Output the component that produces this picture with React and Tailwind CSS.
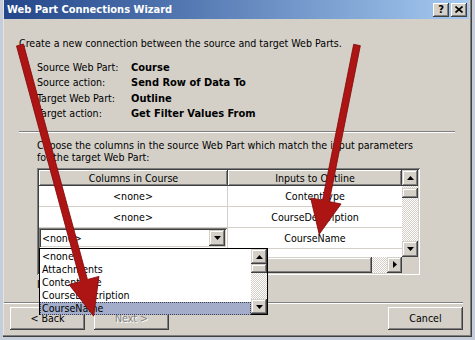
import React from "react";

const F = "font-['DejaVu_Sans_Condensed','DejaVu_Sans',sans-serif]";
const RAISED =
  "shadow-[inset_-1px_-1px_0_#404040,inset_1px_1px_0_#ffffff,inset_-2px_-2px_0_#808080,inset_2px_2px_0_#d4d0c8]";
const SCRBTN =
  "shadow-[inset_-1px_-1px_0_#404040,inset_1px_1px_0_#d4d0c8,inset_-2px_-2px_0_#808080,inset_2px_2px_0_#ffffff]";
const SUNKEN =
  "shadow-[inset_1px_1px_0_#808080,inset_-1px_-1px_0_#ffffff,inset_2px_2px_0_#404040,inset_-2px_-2px_0_#d4d0c8]";
const CHECK =
  "bg-[image:repeating-conic-gradient(#d4d0c8_0_25%,#ffffff_0_50%)] bg-[length:2px_2px]";

function Tri({ dir }) {
  const pts = {
    up: "0,4 3.5,0 7,4",
    down: "0,0 3.5,4 7,0",
    right: "0,0 4,3.5 0,7",
  }[dir];
  const w = dir === "right" ? 4 : 7;
  const h = dir === "right" ? 7 : 4;
  return (
    <svg width={w} height={h} viewBox={`0 0 ${w} ${h}`}>
      <polygon points={pts} fill="#000" />
    </svg>
  );
}

function ScrollBtn({ dir, className = "" }) {
  return (
    <div
      className={`bg-[#d4d0c8] ${SCRBTN} flex items-center justify-center shrink-0 ${className}`}
    >
      <Tri dir={dir} />
    </div>
  );
}

function Arrows() {
  const arrow = (x, y, ang, len, hw, hl, hh) => (
    <g transform={`translate(${x} ${y}) rotate(${ang})`}>
      <polygon
        points={`0,${-hw} ${len - hl},${-hw} ${len - hl},${-hh} ${len},0 ${len - hl},${hh} ${len - hl},${hw} 0,${hw}`}
        fill="#ad1515"
        stroke="#850c0c"
        strokeWidth="0.8"
        strokeLinejoin="round"
      />
    </g>
  );
  return (
    <svg
      className="absolute inset-0 pointer-events-none"
      width="475"
      height="340"
      viewBox="0 0 475 340"
    >
      {arrow(20, 45, 74.8, 281, 3.6, 37, 15.5)}
      {arrow(357, 45, 101.3, 193, 3.4, 34, 15.5)}
    </svg>
  );
}

export default function App() {
  return (
    <div
      className={`w-[475px] h-[340px] relative overflow-hidden bg-[#c6cdda] flex pl-[3px] pr-[3px] pb-[3px] ${F} text-[10.6px] text-black`}
    >
      {/* dialog */}
      <div className="flex-1 flex flex-col bg-[#d4d0c8] pl-[1px] pr-[3px] pb-[3px] shadow-[inset_-1px_-1px_0_#404040,inset_-2px_-2px_0_#808080,inset_1px_0_0_#e6e4de]">
        {/* title bar */}
        <div className="h-[19px] shrink-0 flex items-center pl-[3px] pr-[2px] bg-gradient-to-r from-[#24468a] to-[#a6caf0]">
          <span className="text-white font-bold text-[11px] leading-none">
            Web Part Connections Wizard
          </span>
          <div className="ml-auto flex gap-[2px]">
            <div
              className={`w-[16px] h-[14px] bg-[#d4d0c8] ${RAISED} flex items-center justify-center font-bold text-[11px] leading-none`}
            >
              ?
            </div>
            <div
              className={`w-[16px] h-[14px] bg-[#d4d0c8] ${RAISED} flex items-center justify-center`}
            >
              <svg width="8" height="7" viewBox="0 0 8 7">
                <path d="M0.5 0.5 L7.5 6.5 M7.5 0.5 L0.5 6.5" stroke="#000" strokeWidth="1.6" />
              </svg>
            </div>
          </div>
        </div>

        {/* body */}
        <div className="flex flex-col">
          <p className="mt-[18px] ml-[15px] leading-[13px] whitespace-nowrap">
            Create a new connection between the source and target Web Parts.
          </p>

          <div className="mt-[10px] ml-[33px] grid grid-cols-[94px_1fr] leading-[15.4px]">
            <span>Source Web Part:</span>
            <span className="font-bold text-[11px]">Course</span>
            <span>Source action:</span>
            <span className="font-bold text-[11px]">Send Row of Data To</span>
            <span>Target Web Part:</span>
            <span className="font-bold text-[11px]">Outline</span>
            <span>Target action:</span>
            <span className="font-bold text-[11px]">Get Filter Values From</span>
          </div>

          <div className="mt-[9px] ml-[15px] w-[436px] h-[2px] border-t border-t-[#808080] border-b border-b-white" />

          <p className="mt-[6px] ml-[33px] leading-[12px] whitespace-nowrap">
            Choose the columns in the source Web Part which match the input parameters
            <br />
            for the target Web Part:
          </p>

          {/* grid */}
          <div className={`mt-[5px] ml-[33px] w-[383px] h-[107px] p-[2px] ${SUNKEN} flex`}>
            <div className="w-[363px] flex flex-col">
              {/* header */}
              <div className="h-[16px] flex shrink-0">
                <div className={`w-[189px] bg-[#d4d0c8] ${RAISED} flex items-center justify-center leading-none pt-[1px]`}>
                  Columns in Course
                </div>
                <div className={`flex-1 bg-[#d4d0c8] ${RAISED} flex items-center justify-center leading-none pt-[1px]`}>
                  Inputs to Outline
                </div>
              </div>
              {/* rows */}
              <div className="h-[71px] bg-white overflow-hidden flex flex-col">
                {[
                  ["<none>", "ContentType"],
                  ["<none>", "CourseDescription"],
                  [null, "CourseName"],
                  ["<none>", "Outline"],
                ].map(([a, b], i) => (
                  <div key={i} className="h-[21px] shrink-0 flex border-b border-b-[#d4d0c8]">
                    <div className="w-[189px] border-r border-r-[#d4d0c8] flex items-center justify-center">
                      {a === null ? (
                        <div className={`w-[188px] h-[20px] bg-white ${SUNKEN} flex items-center pl-[3px] pr-[2px]`}>
                          <span className="pt-[2px]">&lt;none&gt;</span>
                          <ScrollBtn dir="down" className="ml-auto w-[16px] h-[16px]" />
                        </div>
                      ) : (
                        <span className={i === 3 ? "pt-[8px]" : "pt-[3px]"}>{a}</span>
                      )}
                    </div>
                    <div className="flex-1 flex items-center justify-center">
                      <span className={i === 3 ? "pt-[8px]" : "pt-[3px]"}>{b}</span>
                    </div>
                  </div>
                ))}
              </div>
              {/* horizontal scrollbar */}
              <div className="h-[16px] flex shrink-0">
                <ScrollBtn dir="up" className="w-[16px] h-[16px]" />
                <div className={`w-[317px] bg-[#d4d0c8] ${SCRBTN}`} />
                <div className={`flex-1 ${CHECK}`} />
                <ScrollBtn dir="right" className="w-[15px] h-[16px]" />
              </div>
            </div>
            {/* vertical scrollbar */}
            <div className="flex-1 flex flex-col">
              <ScrollBtn dir="up" className="h-[16px]" />
              <div className={`h-[2px] ${CHECK}`} />
              <div className={`h-[10px] bg-[#d4d0c8] ${SCRBTN}`} />
              <div className={`flex-1 ${CHECK}`} />
              <ScrollBtn dir="down" className="h-[16px]" />
              <div className="h-[16px] bg-[#d4d0c8]" />
            </div>
          </div>

          <p className="mt-[3px] ml-[33px] leading-[13px] whitespace-nowrap">I</p>

          <div className="mt-[11px] w-[459px] h-[2px] border-t border-t-[#808080] border-b border-b-white" />

          <div className="mt-[3px] ml-[6px] flex">
            <button className={`w-[75px] h-[23px] bg-[#d4d0c8] ${RAISED} flex items-center justify-center pt-[1px]`}>
              &lt; Back
            </button>
            <button className={`ml-[9px] w-[75px] h-[23px] bg-[#d4d0c8] ${RAISED} flex items-center justify-center pt-[1px] text-[#808080] [text-shadow:1px_1px_0_#fff]`}>
              Next &gt;
            </button>
            <button className={`ml-[219px] w-[75px] h-[23px] bg-[#d4d0c8] ${RAISED} flex items-center justify-center pt-[1px]`}>
              Cancel
            </button>
          </div>
        </div>
      </div>

      {/* dropdown list popup */}
      <div className="absolute left-[39px] top-[248px] w-[229px] h-[67px] bg-white border border-black flex">
        <div className="flex-1 flex flex-col pt-[1px]">
          {["<none>", "Attachments", "ContentType", "CourseDescription"].map((t) => (
            <div key={t} className="h-[13px] leading-[13px] pl-[2px] whitespace-nowrap">
              {t}
            </div>
          ))}
          <div className="h-[13px] leading-[11px] pl-[1px] bg-[#a3adca] border border-dotted border-[#3a3f55] whitespace-nowrap">
            CourseName
          </div>
        </div>
        <div className="w-[16px] flex flex-col">
          <ScrollBtn dir="up" className="h-[15px]" />
          <div className={`h-[9px] bg-[#d4d0c8] ${SCRBTN}`} />
          <div className={`flex-1 ${CHECK}`} />
          <ScrollBtn dir="down" className="h-[15px]" />
        </div>
      </div>

      <Arrows />
    </div>
  );
}
